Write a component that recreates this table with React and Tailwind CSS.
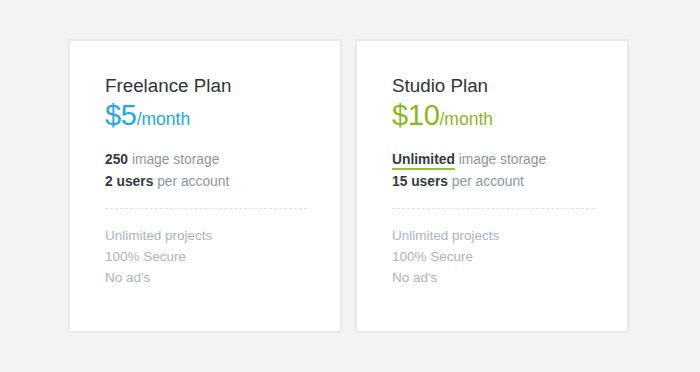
import React from 'react';

const plans = [
    {
        name: 'Freelance Plan',
        price: '$5',
        color: 'text-[#22a7de]',
        storage: '250',
        users: '2 users',
        underline: false,
    },
    {
        name: 'Studio Plan',
        price: '$10',
        color: 'text-[#8bb61f]',
        storage: 'Unlimited',
        users: '15 users',
        underline: true,
    },
];

function PlanCard({ plan }) {
    return (
        <div className="w-[274px] h-[294px] bg-white border-2 border-[#e6eaee] rounded-[3px] pl-[35px] pr-[35px] pt-[33px]">
            <h2 className="text-[18.8px] leading-[24px] text-[#2f3439]">{plan.name}</h2>
            <div className={`flex items-baseline ${plan.color}`}>
                <span className="text-[29px] leading-[34px] tracking-[-0.3px]">{plan.price}</span>
                <span className="text-[17.5px]">/month</span>
            </div>

            <ul className="mt-[17px] text-[13.8px] leading-[22px] text-[#8a97a4]">
                <li>
                    <span
                        className={`font-bold text-[#333a40] ${
                            plan.underline ? 'border-b-2 border-[#8cc63f] pb-[1px]' : ''
                        }`}
                    >
                        {plan.storage}
                    </span>{' '}
                    image storage
                </li>
                <li>
                    <span className="font-bold text-[#333a40]">{plan.users}</span> per account
                </li>
            </ul>

            <div className="mt-[15px] w-[202px] border-t border-dashed border-[#dfe3e7]" />

            <ul className="mt-[16px] text-[13.5px] leading-[21px] text-[#a9b5c0]">
                <li>Unlimited projects</li>
                <li>100% Secure</li>
                <li>No ad's</li>
            </ul>
        </div>
    );
}

export default function App() {
    return (
        <div
            className="w-[700px] h-[372px] bg-[#f3f3f3] flex gap-[13px] pl-[68px] pt-[39px]"
            style={{ fontFamily: '"Liberation Sans", Arial, sans-serif' }}
        >
            {plans.map((plan) => (
                <PlanCard key={plan.name} plan={plan} />
            ))}
        </div>
    );
}
